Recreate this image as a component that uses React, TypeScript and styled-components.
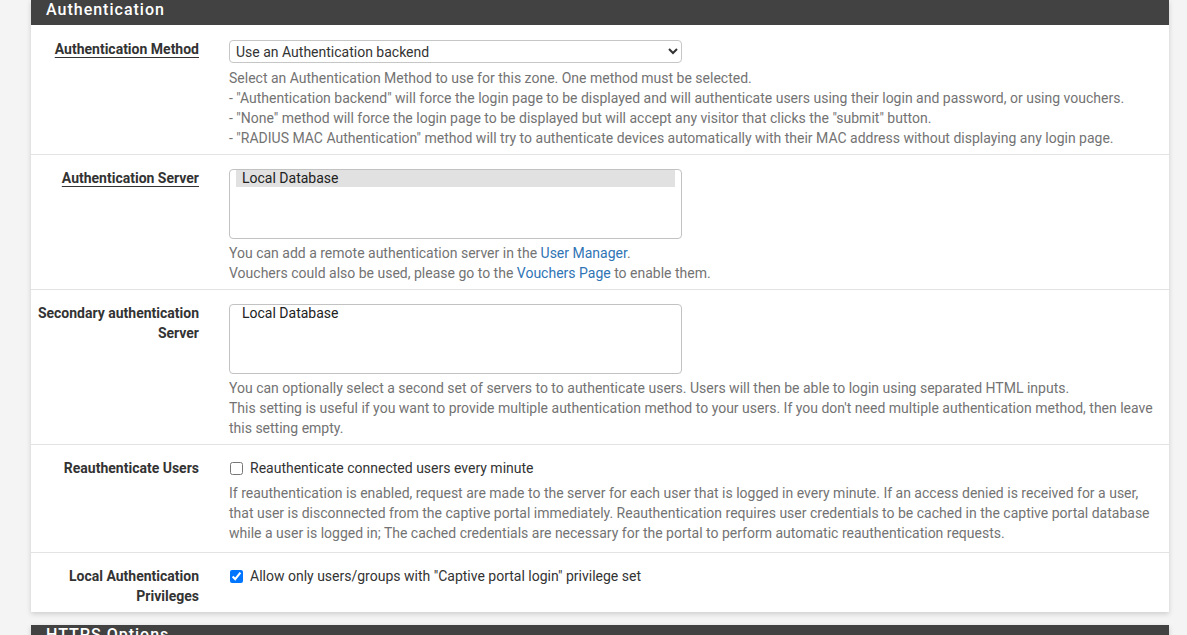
import { ReactNode } from 'react';
import styled, { createGlobalStyle } from 'styled-components';

const GlobalStyle = createGlobalStyle`
  html, body { margin: 0; padding: 0; overflow: hidden; }
  body {
    background: #f4f4f4;
    font-family: Roboto, "Liberation Sans", sans-serif;
    font-size: 14px;
    color: #333;
  }
`;

const Page = styled.div`
  height: 635px;
  overflow: hidden;
  padding: 0 18px 0 31px;
  box-sizing: border-box;
  width: 1187px;
`;

const Panel = styled.section`
  background: #fff;
  box-shadow: 0 2px 5px rgba(0, 0, 0, 0.16);
  margin-bottom: 13px;
`;

const PanelHeading = styled.h2`
  margin: 0;
  background: #424242;
  color: #fff;
  font-size: 16px;
  font-weight: 500;
  letter-spacing: 1px;
  line-height: 20px;
  padding: 0 15px 5px;
`;

const Row = styled.div<{ $pb?: number }>`
  display: grid;
  grid-template-columns: 168px 1fr;
  column-gap: 30px;
  padding: 13px 14px ${p => p.$pb ?? 6}px 0;
  &:not(:last-child) { border-bottom: 1px solid #e3e3e3; }
  ${PanelHeading} + & { padding-top: 14px; }
`;

const Label = styled.div<{ $required?: boolean }>`
  text-align: right;
  font-weight: 700;
  line-height: 20px;
  padding-left: 4px;
  color: #333;
  span {
    text-decoration: ${p => (p.$required ? 'underline' : 'none')};
    text-underline-offset: 3px;
  }
`;

const Control = styled.div`
  min-width: 0;
`;

const Select = styled.select`
  width: 453px;
  height: 23px;
  font-family: Roboto, "Liberation Sans", sans-serif;
  font-size: 14px;
  color: #333;
  background: #fff;
  border: 1px solid #c6c6c6;
  border-radius: 4px;
  padding: 0 2px;
  margin-top: 1px;
`;

const ListBox = styled.div`
  width: 453px;
  height: 70px;
  box-sizing: border-box;
  border: 1px solid #c2c2c2;
  border-radius: 4px;
  padding: 0 6px;
  margin-top: 1px;
`;

const Option = styled.div<{ $selected?: boolean }>`
  line-height: 17px;
  padding: 0 6px;
  color: #222;
  background: ${p => (p.$selected ? '#e1e1e1' : 'transparent')};
`;

const Help = styled.div<{ $mt?: number }>`
  color: #737373;
  line-height: 20px;
  margin-top: ${p => p.$mt ?? 5}px;
  a { color: #2f74b5; text-decoration: none; }
`;

const CheckLine = styled.label`
  display: flex;
  align-items: center;
  gap: 7px;
  line-height: 20px;
  padding-left: 1px;
  input { margin: 0; width: 13px; height: 13px; }
`;

const Field = (props: { label: string, required?: boolean, pb?: number, children: ReactNode }) => {
  const { label, required, pb, children } = props;
  return (
    <Row $pb={pb}>
      <Label $required={required}><span>{label}</span></Label>
      <Control>{children}</Control>
    </Row>
  );
};

export default function App() {
  return (
    <Page>
      <GlobalStyle />
      <Panel>
        <PanelHeading>Authentication</PanelHeading>

        <Field label="Authentication Method" required>
          <Select defaultValue="radius">
            <option value="radius">Use an Authentication backend</option>
            <option value="none">None, don't authenticate users</option>
            <option value="mac">Use RADIUS MAC Authentication</option>
          </Select>
          <Help>
            Select an Authentication Method to use for this zone. One method must be selected.<br />
            - "Authentication backend" will force the login page to be displayed and will authenticate users using their login and password, or using vouchers.<br />
            - "None" method will force the login page to be displayed but will accept any visitor that clicks the "submit" button.<br />
            - "RADIUS MAC Authentication" method will try to authenticate devices automatically with their MAC address without displaying any login page.
          </Help>
        </Field>

        <Field label="Authentication Server" required>
          <ListBox>
            <Option $selected>Local Database</Option>
          </ListBox>
          <Help $mt={4}>
            You can add a remote authentication server in the <a href="#">User Manager</a>.<br />
            Vouchers could also be used, please go to the <a href="#">Vouchers Page</a> to enable them.
          </Help>
        </Field>

        <Field label="Secondary authentication Server">
          <ListBox>
            <Option>Local Database</Option>
          </ListBox>
          <Help $mt={4}>
            You can optionally select a second set of servers to to authenticate users. Users will then be able to login using separated HTML inputs.<br />
            This setting is useful if you want to provide multiple authentication method to your users. If you don't need multiple authentication method, then leave this setting empty.
          </Help>
        </Field>

        <Field label="Reauthenticate Users" pb={9}>
          <CheckLine>
            <input type="checkbox" />
            Reauthenticate connected users every minute
          </CheckLine>
          <Help>
            If reauthentication is enabled, request are made to the server for each user that is logged in every minute. If an access denied is received for a user, that user is disconnected from the captive portal immediately. Reauthentication requires user credentials to be cached in the captive portal database while a user is logged in; The cached credentials are necessary for the portal to perform automatic reauthentication requests.
          </Help>
        </Field>

        <Field label="Local Authentication Privileges">
          <CheckLine>
            <input type="checkbox" defaultChecked />
            Allow only users/groups with "Captive portal login" privilege set
          </CheckLine>
        </Field>
      </Panel>

      <Panel>
        <PanelHeading>HTTPS Options</PanelHeading>
      </Panel>
    </Page>
  );
}
